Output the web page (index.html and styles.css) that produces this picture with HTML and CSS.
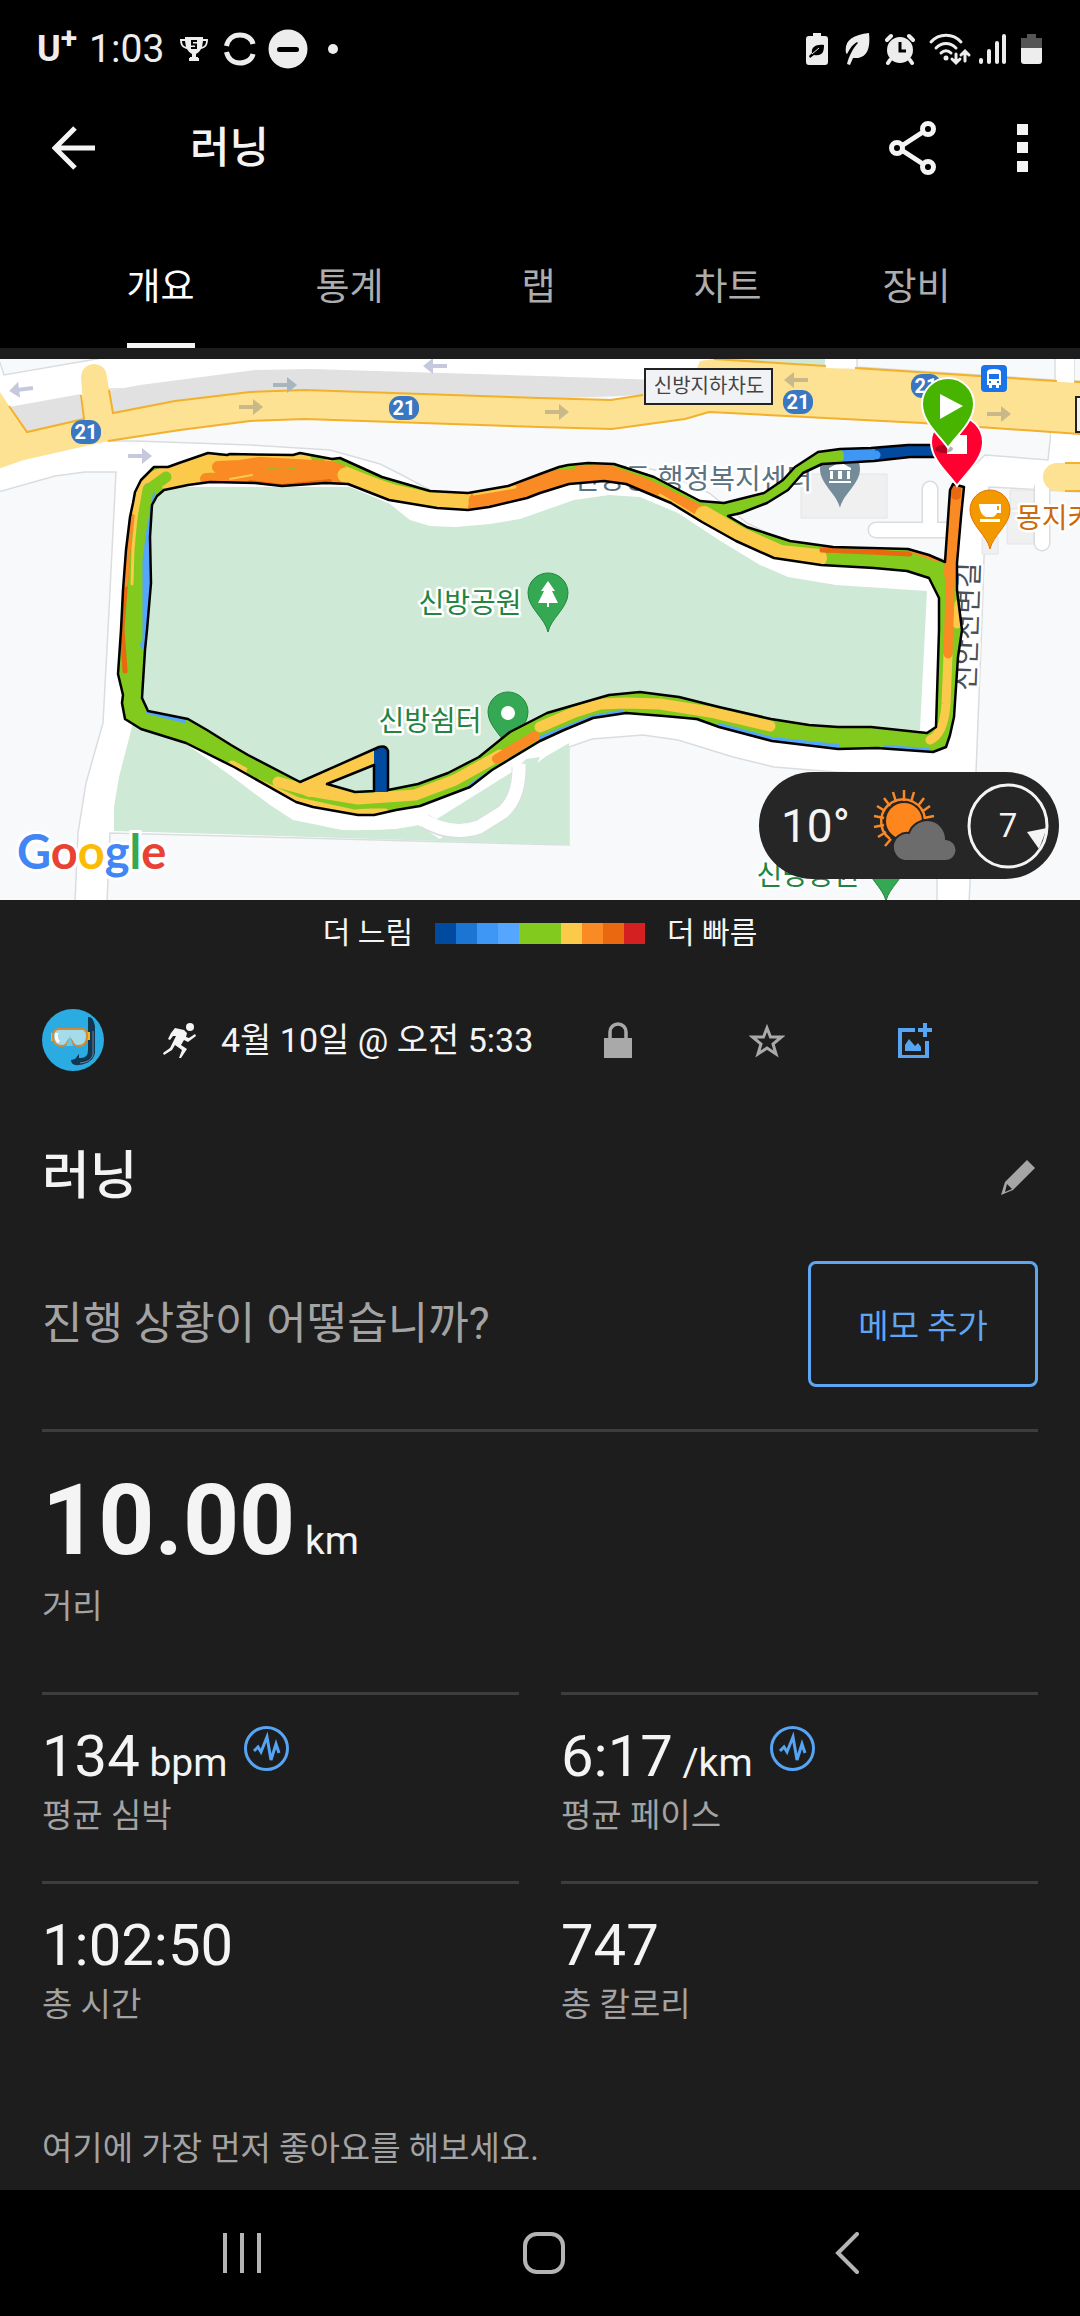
FILE: index.html
```html
<!DOCTYPE html>
<html lang="ko">
  <head>
    <meta charset="utf-8">
    <meta name="viewport" content="width=device-width">
    <title>러닝</title>
    <link rel="stylesheet" href="styles.css">
  </head>
  <body>

    <div class="statusbar">
      <div class="status-left">
        <span class="carrier">U<sup>+</sup></span>
        <span class="clock">1:03</span>
        <svg class="trophy" width="28" height="24" viewBox="0 0 28 24"><path fill="#ededed" d="M5 0h18v2h5c0 6-2 9-7 10-1 2-3 4-5 5v3h2v1h1v3H9v-3h1v-1h2v-3c-2-1-4-3-5-5-5-1-7-4-7-10h5zM2 4c0 3 1 5 4 6L5 4zm24 0h-3l-1 6c3-1 4-3 4-6z"/><path fill="none" stroke="#000" stroke-width="2" d="M17 4h-5v3.500h4V11h-5"/></svg>
        <svg width="32" height="34" viewBox="0 0 32 34"><path fill="none" stroke="#ededed" stroke-width="5" d="M2.500 14C4 7 9 3 16 3s12 4 13 9M2.500 20c1.500 7 6.500 11 13.500 11s12-4 13-9"/></svg>
        <svg width="40" height="40" viewBox="0 0 40 40"><circle cx="20" cy="20" r="19.500" fill="#ededed"/><rect x="9" y="18" width="22" height="5" rx="2.500"/></svg>
        <span class="dot"></span>
      </div>
      <div class="status-right">
        <svg width="25" height="34" viewBox="0 0 25 34"><path fill="#ededed" d="M7 1h8v3h4q3 0 3 3v23q0 3-3 3H3q-3 0-3-3V7q0-3 3-3h4z"/><path d="M18 13c-8-1-13 2-12 8l-3 3 1 2 4-3c8 1 10-2 10-10z"/><path stroke="#ededed" d="M6 22l7-6"/></svg>
        <svg width="26" height="34" viewBox="0 0 26 34"><path fill="#ededed" d="M24 1C7 3-1 9 1 21l1 1C5 16 8 12 12 10l1 1C8 16 4 24 2 32l3 1 3-7c12 1 18-6 16-25z"/></svg>
        <svg width="30" height="34" viewBox="0 0 30 34"><g fill="#ededed"><circle cx="15" cy="18" r="13"/></g><g stroke="#ededed" stroke-width="4" stroke-linecap="round" fill="none"><path d="M2 8l4-4M28 8l-4-4M5 28l-2 3M25 28l2 3"/></g><path fill="none" stroke="#000" stroke-width="3" d="M15 10v9h6"/></svg>
        <svg class="wifi" width="36" height="34" viewBox="0 0 36 34"><g fill="none" stroke="#ededed" stroke-width="3" stroke-linecap="round"><path d="M2 10c8-9 22-9 30 0M7 16c6-6 14-6 20 0M12 21c3-3 7-3 10 0M27 22v8M23 27l4 4 4-4M36 29v-9M32 23l4-4 4 4"/></g><circle cx="17" cy="26" r="2.500" fill="#ededed"/></svg>
        <svg width="28" height="34" viewBox="0 0 28 34"><path fill="none" stroke="#ededed" stroke-width="4" stroke-linecap="round" d="M2 28v2M10 19v11M18 11v19M25 4v26"/></svg>
        <svg width="22" height="34" viewBox="0 0 22 34"><path fill="#555" d="M6 2h9v4h6v10H0V6h6z"/><path fill="#ededed" d="M0 16h21v13q0 3-3 3H3q-3 0-3-3z"/></svg>
      </div>
    </div>

    <header class="appbar">
      <button class="icon-btn" aria-label="뒤로"><svg width="44" height="44" viewBox="0 0 44 44"><path fill="none" stroke="#f4f4f4" stroke-width="5" d="M23 2L3 22l20 20M3 22h40"/></svg></button>
      <h1>러닝</h1>
      <button class="icon-btn share" aria-label="공유"><svg width="48" height="56" viewBox="0 0 48 56"><g fill="none" stroke="#f4f4f4" stroke-width="5"><path d="M14 25l20-13M14 31l20 13"/><circle cx="8" cy="28" r="5.500"/><circle cx="39" cy="9" r="5.500"/><circle cx="39" cy="47" r="5.500"/></g></svg></button>
      <button class="icon-btn" aria-label="더보기"><svg width="12" height="50" viewBox="0 0 12 50"><path fill="#f4f4f4" d="M0 1h11v11H0zM0 19h11v11H0zM0 38h11v11H0z"/></svg></button>
    </header>

    <nav class="tabs">
      <a class="active" href="#overview">개요</a>
      <a href="#stats">통계</a>
      <a href="#laps">랩</a>
      <a href="#charts">차트</a>
      <a href="#gear">장비</a>
    </nav>

    <main>
      <section class="map">
        <svg class="map-canvas" viewBox="0 0 1080 541" preserveAspectRatio="xMidYMid slice">
          <defs>
            <path id="ring" d="M121 271L123 231 126 191 130 158 133 144 135 133 141 121 154 108 168 108 179 104 208 94 227 96 230 95 293 96 300 94 332 100 340 99 382 118 430 132 468 134 508 127 540 115 559 108 568 106 588 104 614 105 654 118 700 142 724 144 764 134 783 121 795 108 818 93 840 90 871 89 908 86 948 86 948 98 910 98 874 102 822 105 803 114 788 131 767 144 741 154 728 157 747 168 790 182 833 188 908 190 929 196 945 203 950 131 953 125 964 128 961 158 957 204 957 231 962 271 958 298 954 358 950 376 946 388 933 393 877 389 838 390 772 382 719 368 697 360 664 357 626 354 593 359 564 371 540 382 492 411 470 428 420 447 396 451 374 456 358 456 313 448 296 443 234 408 186 384 141 370 125 360 122 344 123 336 118 315zM147 271L151 224 150 178 152 146 157 137 164 131 188 126 210 123 255 124 282 127 325 124 348 125 389 141 437 149 468 151 489 148 527 139 540 134 569 125 604 122 626 125 671 144 702 163 736 182 774 199 821 206 874 209 907 212 929 219 939 239 939 271 936 368 927 374 871 368 838 368 809 366 771 360 719 348 679 338 640 333 609 336 571 347 547 354 510 373 479 398 448 414 418 425 388 431 388 392Q386 386 379 388L300 423 248 396 231 386 207 371 188 360 148 352 142 339 145 291zM327 425L374 406 374 432 355 433z"/>
            <clipPath id="ring-clip"><use href="#ring" clip-rule="evenodd"/></clipPath>
            <path id="arrow" d="M0 -2h14v-6l10 8-10 8V2H0z"/>
            <path id="pin" d="M0 0C-3-14-20-24-20-39a20 20 0 0 1 40 0C20-24 3-14 0 0z"/>
            <path id="marker" d="M0 0C-8-12-26-26-26-44a26 26 0 0 1 52 0C26-26 8-12 0 0z"/>
            <g id="shield"><rect x="-15" y="-12" width="30" height="24" rx="11"/></g>
          </defs>

          <rect width="1080" height="541" fill="#fff"/>

          <!-- land blocks -->
          <g fill="#f8f9fb" stroke="#dadde0" stroke-width="1.500">
            <path d="M-2-2H108L4 16z"/>
            <path d="M-2 133L55 117 85 113H116L108 271 103 364 86 424 78 474 75 543H-2z"/>
            <path d="M107 82H135L250 86 330 91 380 105 400 115 430 131 460 135 500 133 560 115 604 106 640 108 660 112 709 134 747 164 800 190 900 195 930 198 945 200 950 130 985 96 1048 101 1051 73 709 30H107z"/>
            <path d="M107 543L110 474 569 486 569 388 592 380 643 376 678 381 733 398 774 408 836 413 937 418V543z"/>
            <path d="M989 128L1082 133V543H969L976 413 982 261 984 198z"/>
            <path d="M857-2H1055V21L857 8zM1074-2H1082V22H1074z"/>
          </g>

          <!-- park -->
          <g fill="#cfe9d7">
            <path d="M719-2H825V7H719z"/>
            <path d="M150 128H290L350 128 390 145 410 161 430 167 455 168 490 165 520 160 574 141 609 136 640 138 678 154 719 181 760 206 788 218 836 226 927 232 920 371 750 375 620 344 540 370 460 415 420 435 355 442 300 432 230 395 150 360 143 345 146 150z"/>
            <path d="M133 364L165 366 182 380 241 424 270 446 293 461 344 471 396 470 418 466 470 440 540 397 569 384V486L114 472V448L119 418z"/>
          </g>
          <path d="M133 364C165 363 172 374 182 382L241 424Q290 464 344 471 390 472 418 466L440 480 545 398 569 384 540 376 380 455 300 445 180 375z" fill="#fff"/>
          <path d="M420 462L432 463 515 411 526 400 540 398 530 420 505 452 450 478z" fill="#cfe9d7"/>
          <path d="M424 462Q450 478 479 468L503 453Q520 438 519 408" fill="none" stroke="#dadde0" stroke-width="15"/>
          <path d="M420 459Q450 478 479 468L503 453Q520 438 519 405" fill="none" stroke="#fff" stroke-width="13"/>

          <!-- lanes and buildings -->
          <g fill="#f0f0f1" stroke="#e2e4e6">
            <path d="M801 115h86v44h-86zM1010 131h29v19h-29zM1007 154h27v31h-27zM982 178h16v17h-16z"/>
          </g>
          <g fill="none" stroke-linecap="round" stroke="#dadde0" stroke-width="17"><path d="M930 130V170M876 171H945M1042 130V184"/></g>
          <g fill="none" stroke-linecap="round" stroke="#fff" stroke-width="14"><path d="M930 130V170M876 171H950M1042 122V184"/></g>
          <path d="M1051 65h16v40h-16z" fill="#fff"/>

          <!-- main road -->
          <path fill="#e1e1e1" d="M9 48L81 35 84 62 27 73zM109 32L140 26 255 11 310 10 540 17 660 21 645 36 540 40 250 36 112 56z"/>
          <path fill="#fde293" d="M-2 30L9 47 27 73 84 60 81 18Q82 6 94 5 106 6 107 18L113 54 175 42 250 33 305 31 540 39 611 41 643 36 690 26 700 2 714 0 826 7 1080 23V75L922 64 709 53 685 60 612 70 540 68 305 60 250 62 180 71 108 82 24 101-2 110z"/>
          <path fill="none" stroke="#f2b02c" stroke-width="2" d="M9 47L27 73 84 60 81 36M109 31L113 54 175 42 250 33 305 31 540 39 611 41 643 36M714 0L826 7 855 9 1056 22 1080 23M1080 75L922 64 709 53 685 60 612 70 540 68 305 60 250 62 180 71 108 82"/>
          <path fill="#fff" d="M826-2h29V10l-29-1zM1057-2h17V24l-17-1z"/>
          <path fill="#fde293" d="M1082 104H1057a14 14 0 0 0 0 28H1082z"/>
          <path fill="none" stroke="#f2b02c" stroke-width="2" d="M1065 104H1082M1065 132H1082"/>

          <g fill="#c6c9dd">
            <use href="#arrow" transform="translate(33 29) rotate(173)"/>
            <use href="#arrow" transform="translate(447 7) rotate(180)"/>
            <use href="#arrow" transform="translate(128 97)"/>
          </g>
          <use href="#arrow" transform="translate(273 26)" fill="#a9b5bd"/>
          <g fill="#c9b889">
            <use href="#arrow" transform="translate(239 48)"/>
            <use href="#arrow" transform="translate(545 53)"/>
            <use href="#arrow" transform="translate(808 21) rotate(180)"/>
            <use href="#arrow" transform="translate(987 55)"/>
          </g>

          <g fill="#3a77c2">
            <use href="#shield" x="86" y="73"/><use href="#shield" x="404" y="49"/><use href="#shield" x="798" y="43"/><use href="#shield" x="926" y="27"/>
          </g>
          <g class="shield-text">
            <text x="86" y="80">21</text><text x="404" y="56">21</text><text x="798" y="50">21</text><text x="926" y="34">21</text>
          </g>

          <rect x="645" y="10" width="127" height="35" fill="#f1f2f5" stroke="#222" stroke-width="2"/>
          <text class="tunnel" x="709" y="34">신방지하차도</text>
          <rect x="1076" y="38" width="20" height="35" fill="#f1f2f5" stroke="#222" stroke-width="2"/>

          <rect x="981" y="6" width="26" height="27" rx="4" fill="#1a73e8"/>
          <path fill="#fff" d="M987 13q0-3 7-3t7 3v13h-2v3h-3v-3h-4v3h-3v-3h-2z"/><path fill="#1a73e8" d="M989 15h10v5h-10zM989 22h2v2h-2zM997 22h2v2h-2z"/>

          <!-- places -->
          <text class="place civic" x="693" y="130">신방동 행정복지센터</text>
          <use href="#pin" x="840" y="149" fill="#748c9a"/>
          <path fill="#fff" d="M840 103l11 6v2h-22v-2zM830 112h3v8h-3zM838 112h4v8h-4zM847 112h3v8h-3zM829 122h22v2h-22z"/>

          <text class="place park" x="470" y="254">신방공원</text>
          <use href="#pin" x="548" y="273" fill="#34a853" stroke="#23883f"/>
          <path fill="#fff" d="M548 222l7 10h-3l6 12h-9v4h-2v-4h-9l6-12h-3z"/>
          <text class="place park" x="430" y="372">신방쉼터</text>
          <use href="#pin" x="508" y="392" fill="#34a853" stroke="#23883f"/>
          <circle cx="508" cy="354" r="7" fill="#fff"/>
          <text class="place park" x="808" y="526">신방공원</text>
          <use href="#pin" x="886" y="542" fill="#34a853" stroke="#23883f"/>

          <text class="place road" transform="translate(977 268) rotate(-88)">신안천변길</text>

          <use href="#pin" x="990" y="190" fill="#f29900" stroke="#e37400"/>
          <path fill="#fff" d="M979 145h22v9h-4q-2 4-5 4h-6q-6-2-7-13zM997 147v4h2v-4zM980 160h20v3h-20z"/>
          <text class="place cafe" x="1016" y="169">몽지카페</text>

          <!-- route -->
          <use href="#ring" fill="#82ca1e" fill-rule="evenodd"/>
          <g clip-path="url(#ring-clip)" fill="none" stroke-linecap="round" stroke-linejoin="round">
            <path stroke="#fbca4a" stroke-width="18" d="M136 160L145 125 175 112 212 103"/>
            <path stroke="#fbca4a" stroke-width="26" d="M172 120L230 108 300 106"/>
            <path stroke="#fbca4a" stroke-width="24" d="M330 112L385 133 430 145 470 147"/>
            <path stroke="#fa8a24" stroke-width="12" d="M206 120L250 118 330 118 348 124M218 108L240 107 260 104 332 108 340 110"/>
            <path stroke="#fa8a24" stroke-width="12" d="M250 112L280 108 338 112"/>
            <path stroke="#ea680f" stroke-width="4" d="M250 123L282 127 330 122"/>
            <path stroke="#82ca1e" stroke-width="1" d="M268 109Q283 112 296 109"/>
            <path stroke="#fbca4a" stroke-width="2" d="M230 120L252 116"/>
            <path stroke="#82ca1e" stroke-width="9" d="M335 98L383 117 425 131"/>
            <path stroke="#fbca4a" stroke-width="15" d="M345 116L390 132 430 141 468 144"/>
            <path stroke="#ea680f" stroke-width="5" d="M125 312L122 270 128 191"/>
            <path stroke="#fa8a24" stroke-width="6" d="M125 225L128 185 132 158"/>
            <path stroke="#54a6ff" stroke-width="12" d="M149 130L147 160 147 235 146 285"/>
            <path stroke="#82ca1e" stroke-width="11" d="M166 118L148 131 141 170 137 200 137 280"/>
            <path stroke="#fbca4a" stroke-width="3" d="M137 148L133 190 132 225"/>
            <path stroke="#fa8a24" stroke-width="19" d="M478 142L510 134 560 118 604 114 645 129 700 156"/>
            <path stroke="#fa8a24" stroke-width="12" d="M474 148L520 135"/>
            <path stroke="#fbca4a" stroke-width="3" d="M474 135L515 128M660 136L720 172"/>
            <path stroke="#82ca1e" stroke-width="3" d="M552 110L575 108"/>
            <path stroke="#fbca4a" stroke-width="18" d="M704 156L740 177 780 195 818 199"/>
            <path stroke="#ea680f" stroke-width="5" d="M822 191L870 193 910 195"/>
            <path stroke="#fa8a24" stroke-width="4" d="M912 192L938 201"/>
            <path stroke="#3e97f4" stroke-width="18" d="M844 98L874 96"/>
            <path stroke="#82ca1e" stroke-width="18" d="M800 110L823 98 835 97"/>
            <path stroke="#004ba0" stroke-width="22" d="M885 95L950 91"/>
            <path stroke="#3e97f4" stroke-width="9" d="M870 96L876 96"/>
            <path stroke="#fbca4a" stroke-width="9" d="M948 296L946 345Q944 375 930 381M959 245L957 265"/>
            <path stroke="#fa8a24" stroke-width="14" d="M956 125L953 165 951 215"/>
            <path stroke="#fa8a24" stroke-width="9" d="M952 180L950 230 948 295"/>
            <path stroke="#ea680f" stroke-width="10" d="M956 128V136"/>
            <path stroke="#54a6ff" stroke-width="4" d="M148 353L184 362M470 427L492 412M540 379L593 358 622 353M719 366L772 380 838 387M885 388L928 391"/>
            <path stroke="#fbca4a" stroke-width="11" d="M540 368L575 353 600 345 625 344 660 345 710 353 770 367"/>
            <path stroke="#fbca4a" stroke-width="9" d="M232 406L296 440 358 454 385 454"/>
            <path stroke="#82ca1e" stroke-width="7" d="M250 412L300 435 355 447 410 442 465 422"/>
            <path stroke="#fbca4a" stroke-width="11" d="M278 423L310 432 358 440 415 436 455 421 500 396"/>
            <path stroke="#fbca4a" stroke-width="22" d="M310 427L384 393"/>
            <path stroke="#fbca4a" stroke-width="6" d="M325 430L358 434"/>
            <path stroke="#fa8a24" stroke-width="10" d="M497 400L535 377"/>
            <path stroke="#004ba0" stroke-width="14" stroke-linecap="butt" d="M381 433V386"/>
          </g>
          <use href="#ring" fill="none" stroke="#000" stroke-width="2.500" stroke-linejoin="round"/>

          <use href="#marker" x="957" y="127" fill="#ff0030" stroke="#fff" stroke-width="2"/>
          <path fill="#fff" d="M947 76h20v19h-20z"/>
          <ellipse cx="944" cy="90" rx="9" ry="4" opacity=".3"/>
          <use href="#marker" x="948" y="89" fill="#47b400" stroke="#fff" stroke-width="2"/>
          <path fill="#fff" d="M940 35l23 12-23 13z"/>

          <text class="google" x="17" y="510"><tspan fill="#4285f4">G</tspan><tspan fill="#e94235">o</tspan><tspan fill="#fbbc05">o</tspan><tspan fill="#4285f4">g</tspan><tspan fill="#34a853">l</tspan><tspan fill="#e94235">e</tspan></text>
        </svg>

        <div class="weather">
          <span class="temp">10°</span>
          <svg width="84" height="72" viewBox="0 0 84 72">
            <g stroke="#f98826" stroke-width="2.500" fill="none">
              <path d="M31 0V11M20 2L23 12M41 2L38 12M11 8L17 16M51 8L45 16M4 16L12 21M57 16L50 21M1 26L11 28M61 26L51 28M1 37L11 35M5 47L13 42M12 56L18 49"/>
              <path d="M17 49A22 22 0 1 1 52 29"/>
            </g>
            <circle cx="31" cy="31" r="18" fill="#ff861c"/>
            <path fill="#6c6c6c" stroke="#262626" stroke-width="2" d="M32 71a14 14 0 1 1 4-28 19 19 0 0 1 37 6 11 11 0 0 1-1 22z"/>
          </svg>
          <div class="wind">
            <svg width="82" height="86" viewBox="0 0 82 86"><ellipse cx="41" cy="43" rx="39" ry="41" fill="none" stroke="#f4f4f4" stroke-width="3"/><path fill="#f4f4f4" d="M60 49l20-4-8 21z"/></svg>
            <span>7</span>
          </div>
        </div>
      </section>

      <div class="legend">
        <span>더 느림</span>
        <div class="scale">
          <i class="c1"></i><i class="c2"></i><i class="c3"></i><i class="c4"></i><i class="c5"></i><i class="c5"></i><i class="c6"></i><i class="c7"></i><i class="c8"></i><i class="c9"></i>
        </div>
        <span>더 빠름</span>
      </div>

      <div class="meta">
        <svg class="avatar" width="62" height="62" viewBox="0 0 62 62">
          <circle cx="31" cy="31" r="31" fill="#2aace3"/>
          <path d="M46 8q5-1 7 9v27q-2 10-16 12-8 1-8-5l4-1 4-5v4q9 1 9-8z" fill="#113651"/>
          <path d="M51 22v24q-2 7-13 8" fill="none" stroke="#6c8798"/>
          <path d="M9 24h3v8H9zM44 23h4v8h-4z" fill="#fcb614"/>
          <path d="M16 20h25q4 1 4 7 0 10-9 10-4 0-6-5-1-2-2-2-1 0-2 2-2 5-6 5-9 0-9-10 0-6 5-7z" fill="#a5dce9" stroke="#d18a3c" stroke-width="2"/>
          <path d="M28 27l3 10h-7z" fill="#6cc5e2"/><path d="M15 24q-2 6 2 9" fill="none" stroke="#fff" stroke-width="3"/>
        </svg>
        <svg class="runner" width="34" height="36" viewBox="0 0 34 36"><circle cx="27" cy="5" r="4" fill="#f4f4f4"/><path fill="#f4f4f4" d="M12 6l9 2 3 3-1 4 3 1 6-4 1 2-8 6-4-2-3 5 6 4-6 9h-2l3-8-7-5-3 5-8 5-1-2 7-5 6-12-3 0-3 4-2-1 3-6z"/></svg>
        <span class="date">4월 10일 @ 오전 5:33</span>
        <div class="actions">
          <button class="icon-btn" aria-label="비공개"><svg width="36" height="36" viewBox="0 0 36 36"><path fill="#a9a9a9" d="M4 16h28v20H4z"/><path fill="none" stroke="#a9a9a9" stroke-width="3.500" d="M10 17v-7a8 8 0 0 1 16 0v7"/></svg></button>
          <button class="icon-btn" aria-label="즐겨찾기"><svg width="36" height="36" viewBox="0 0 36 36"><path fill="none" stroke="#a9a9a9" stroke-width="3" d="M18 6l3.500 9h11l-8.500 7 3 10-9-6-9 6 3-10-8.500-7h11z"/></svg></button>
          <button class="icon-btn" aria-label="사진 추가"><svg width="36" height="36" viewBox="0 0 36 36"><path fill="none" stroke="#56a4f4" stroke-width="4" d="M18 8H3v27h27V19M28 1v14M21 8h14"/><path fill="#56a4f4" d="M8 29v-6l4-6 6 7 3-3 3 4v4z"/></svg></button>
        </div>
      </div>

      <div class="activity-name">
        <h2>러닝</h2>
        <button class="icon-btn" aria-label="이름 편집"><svg width="38" height="38" viewBox="0 0 38 38"><path fill="#a5a5a5" d="M27 2l8 8-22 22L1 37 5 24z"/><path fill="#1d1d1d" d="M7 26l5 5-7 3z"/></svg></button>
      </div>

      <div class="note">
        <p>진행 상황이 어떻습니까?</p>
        <button class="note-btn">메모 추가</button>
      </div>

      <section class="distance">
        <p class="big">10.00<small> km</small></p>
        <p class="label">거리</p>
      </section>

      <section class="stats">
        <div class="stat">
          <div class="row">
            <p class="value">134<small> bpm</small></p>
            <button class="icon-btn" aria-label="심박 차트"><svg class="pulse" width="45" height="45" viewBox="0 0 45 45"><circle cx="22.500" cy="22.500" r="21" /><path d="M10 25l4-4 3 5 6-15 4 23 5-16 3 9"/></svg></button>
          </div>
          <p class="label">평균 심박</p>
        </div>
        <div class="stat">
          <div class="row">
            <p class="value">6:17<small> /km</small></p>
            <button class="icon-btn" aria-label="페이스 차트"><svg class="pulse" width="45" height="45" viewBox="0 0 45 45"><circle cx="22.500" cy="22.500" r="21" /><path d="M10 25l4-4 3 5 6-15 4 23 5-16 3 9"/></svg></button>
          </div>
          <p class="label">평균 페이스</p>
        </div>
        <div class="stat">
          <p class="value">1:02:50</p>
          <p class="label">총 시간</p>
        </div>
        <div class="stat">
          <p class="value">747</p>
          <p class="label">총 칼로리</p>
        </div>
      </section>

      <p class="likes">여기에 가장 먼저 좋아요를 해보세요.</p>
    </main>

    <div class="navbar">
      <button class="icon-btn" aria-label="최근 앱"><svg width="42" height="42" viewBox="0 0 42 42"><path stroke="#b4b4b4" stroke-width="4" d="M4 1v40M21 1v40M38 1v40"/></svg></button>
      <button class="icon-btn" aria-label="홈"><svg width="42" height="42" viewBox="0 0 42 42"><rect x="2" y="2" width="38" height="38" rx="12" fill="none" stroke="#b4b4b4" stroke-width="4"/></svg></button>
      <button class="icon-btn" aria-label="뒤로"><svg width="42" height="42" viewBox="0 0 42 42"><path fill="none" stroke="#b4b4b4" stroke-width="4" stroke-linecap="round" d="M32 2L13 21l19 19"/></svg></button>
    </div>

  </body>
</html>
```
FILE: styles.css
```css
/* General styles */

* {
  box-sizing: border-box;
}

body {
  margin: 0;
  min-height: 100vh;
  display: flex;
  flex-direction: column;
  background-color: #1d1d1d;
  color: #f4f4f4;
  font-family: Roboto, "Noto Sans CJK KR", sans-serif;
  font-size: 33px;
}

h1, h2, p {
  margin: 0;
}

svg {
  display: block;
}

button {
  font-family: inherit;
  cursor: pointer;
}

.icon-btn {
  padding: 0;
  border: 0;
  background: none;
}

/* Status bar */

.statusbar {
  height: 98px;
  padding: 0 37px;
  display: flex;
  justify-content: space-between;
  align-items: center;
  background-color: #000;
  color: #ededed;
}

.status-left, .status-right {
  display: flex;
  align-items: center;
  gap: 14px;
}

.status-left {
  gap: 12px;
}

.carrier {
  font-size: 36px;
  font-weight: 700;
  line-height: 40px;
}

.carrier sup {
  font-size: 30px;
  line-height: 0;
}

.clock {
  font-size: 39px;
  line-height: 40px;
}

.trophy {
  margin: 0 4px;
}

.wifi {
  overflow: visible;
}

.dot {
  width: 10px;
  height: 10px;
  margin-left: 8px;
  border-radius: 50%;
  background-color: #ededed;
}

/* App bar and tabs */

.appbar {
  height: 100px;
  padding: 0 51px 0 52px;
  display: flex;
  align-items: center;
  background-color: #000;
}

.appbar h1 {
  margin-left: 94px;
  font-size: 43px;
  font-weight: 500;
  line-height: 50px;
}

.appbar .share {
  margin-left: auto;
  margin-right: 80px;
}

.tabs {
  height: 150px;
  padding: 0 69px 0 66px;
  display: flex;
  background-color: #000;
}

.tabs a {
  flex: 1;
  display: flex;
  flex-direction: column;
  align-items: center;
  justify-content: space-between;
  padding-top: 70px;
  font-size: 37px;
  line-height: 40px;
  color: #adadad;
  text-decoration: none;
}

.tabs .active {
  color: #fff;
}

.tabs .active::after {
  content: "";
  width: 68px;
  height: 5px;
  background-color: #f4f4f4;
}

/* Map */

.map {
  position: relative;
  margin-top: 11px;
}

.map-canvas {
  width: 100%;
  height: 541px;
}

.map text {
  font-family: Roboto, "Noto Sans CJK KR", sans-serif;
  text-anchor: middle;
  paint-order: stroke;
}

.map .shield-text text {
  font-size: 20px;
  font-weight: 700;
  fill: #fff;
}

.map .tunnel {
  font-size: 20px;
  fill: #444;
}

.map .place {
  font-size: 28px;
  stroke: #fff;
  stroke-width: 5px;
  stroke-linejoin: round;
}

.map .park {
  fill: #23833f;
}

.map .civic {
  fill: #5b7282;
}

.map .road {
  fill: #4c5059;
}

.map .cafe {
  fill: #c96a10;
  text-anchor: start;
}

.map .google {
  font-family: Lato, sans-serif;
  font-size: 47px;
  font-weight: 700;
  stroke: #fff;
  stroke-width: 6px;
  text-anchor: start;
}

.weather {
  position: absolute;
  right: 21px;
  bottom: 21px;
  width: 300px;
  height: 107px;
  padding: 0 10px 0 22px;
  display: flex;
  align-items: center;
  border-radius: 54px;
  background-color: #262626;
}

.temp {
  margin-right: auto;
  font-size: 46px;
}

.wind {
  display: grid;
  place-items: center;
  margin-left: 10px;
}

.wind svg, .wind span {
  grid-area: 1 / 1;
}

/* Legend */

.legend {
  height: 66px;
  display: flex;
  align-items: center;
  justify-content: center;
  gap: 22px;
  font-size: 30px;
  line-height: 40px;
}

.scale {
  display: flex;
}

.scale i {
  width: 21px;
  height: 21px;
}

.c1 { background-color: #004ba0; }
.c2 { background-color: #1a76d2; }
.c3 { background-color: #3e97f4; }
.c4 { background-color: #54a6ff; }
.c5 { background-color: #82ca1e; }
.c6 { background-color: #fbca4a; }
.c7 { background-color: #fa8a24; }
.c8 { background-color: #ea680f; }
.c9 { background-color: #d42020; }

/* Activity details */

.meta, .activity-name, .note, .distance, .stats, .likes {
  margin: 0 42px;
}

.meta {
  height: 148px;
  display: flex;
  align-items: center;
}

.runner {
  margin: 0 24px 0 59px;
}

.date {
  font-size: 34px;
  line-height: 40px;
}

.actions {
  flex: 1;
  display: flex;
  justify-content: space-between;
  margin-left: 67px;
  margin-right: 105px;
}

.activity-name {
  height: 126px;
  display: flex;
  align-items: center;
  justify-content: space-between;
}

.activity-name h2 {
  font-size: 52px;
  font-weight: 500;
  line-height: 60px;
}

.note {
  padding: 21px 0 42px;
  display: flex;
  align-items: center;
  justify-content: space-between;
  border-bottom: 3px solid #3d3d3d;
  font-size: 44px;
  line-height: 50px;
  color: #a3a3a3;
}

.note-btn {
  height: 126px;
  padding: 0 47px;
  border: 3px solid #5ea6f2;
  border-radius: 8px;
  background: none;
  font-size: 33px;
  color: #5ea6f2;
}

.label {
  line-height: 40px;
  color: #a3a3a3;
}

small {
  font-size: 39px;
  font-weight: 400;
  line-height: 1;
}

.distance {
  padding: 39px 0 65px;
}

.big {
  margin-bottom: 16px;
  font-size: 98px;
  font-weight: 700;
  line-height: 100px;
}

.stats {
  display: grid;
  grid-template-columns: 1fr 1fr;
  column-gap: 42px;
}

.stat {
  padding: 31px 0 45px;
  border-top: 3px solid #3d3d3d;
}

.row {
  display: flex;
  align-items: flex-start;
  gap: 17px;
}

.value {
  margin-bottom: 10px;
  font-size: 58px;
  line-height: 60px;
}

.pulse {
  fill: none;
  stroke: #56a4f4;
  stroke-width: 3px;
}

.likes {
  padding: 59px 0 21px;
  line-height: 40px;
  color: #a3a3a3;
}

/* Navigation bar */

.navbar {
  height: 126px;
  margin-top: auto;
  padding: 0 83px 0 91px;
  display: flex;
  align-items: center;
  justify-content: space-around;
  background-color: #000;
}
```
